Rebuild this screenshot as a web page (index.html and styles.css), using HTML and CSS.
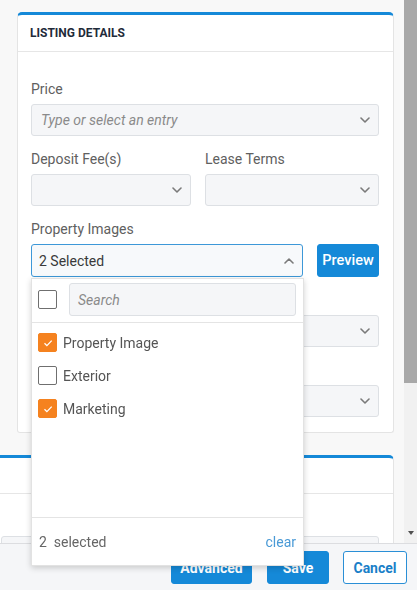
FILE: index.html
```html
<!DOCTYPE html>
<html lang="en">
<head>
<meta charset="utf-8">
<title>Listing Details</title>
<link rel="stylesheet" href="styles.css">
</head>
<body>
<div class="app">
  <main class="content">
    <section class="card">
      <header class="card-head">LISTING DETAILS</header>
      <div class="card-body">
        <div class="field">
          <label class="label">Price</label>
          <div class="select">
            <span class="placeholder">Type or select an entry</span>
            <svg class="chev" viewBox="0 0 10 6" width="10" height="6"><path d="M1 1l4 4 4-4"/></svg>
          </div>
        </div>
        <div class="row">
          <div class="field grow-sm">
            <label class="label">Deposit Fee(s)</label>
            <div class="select">
              <svg class="chev" viewBox="0 0 10 6" width="10" height="6"><path d="M1 1l4 4 4-4"/></svg>
            </div>
          </div>
          <div class="field grow-lg">
            <label class="label">Lease Terms</label>
            <div class="select">
              <svg class="chev" viewBox="0 0 10 6" width="10" height="6"><path d="M1 1l4 4 4-4"/></svg>
            </div>
          </div>
        </div>
        <div class="field">
          <label class="label">Property Images</label>
          <div class="row">
            <div class="multi">
              <div class="select select-open">
                <span class="value">2 Selected</span>
                <svg class="chev chev-up" viewBox="0 0 10 6" width="10" height="6"><path d="M1 5l4-4 4 4"/></svg>
              </div>
              <div class="dropdown">
                <div class="dd-search">
                  <span class="check"></span>
                  <div class="search-box"><span class="placeholder">Search</span></div>
                </div>
                <ul class="dd-list">
                  <li class="dd-item"><span class="check on"><svg viewBox="0 0 12 12" width="12" height="12"><path d="M2.5 6.2l2.4 2.4 4.8-5"/></svg></span>Property Image</li>
                  <li class="dd-item"><span class="check"></span>Exterior</li>
                  <li class="dd-item"><span class="check on"><svg viewBox="0 0 12 12" width="12" height="12"><path d="M2.5 6.2l2.4 2.4 4.8-5"/></svg></span>Marketing</li>
                </ul>
                <div class="dd-foot">
                  <span>2&nbsp; selected</span>
                  <a class="clear" href="#">clear</a>
                </div>
              </div>
            </div>
            <button class="btn btn-primary btn-preview" type="button">Preview</button>
          </div>
        </div>
        <div class="field">
          <span class="label"></span>
          <div class="select">
            <svg class="chev" viewBox="0 0 10 6" width="10" height="6"><path d="M1 1l4 4 4-4"/></svg>
          </div>
        </div>
        <div class="field">
          <span class="label"></span>
          <div class="select">
            <svg class="chev" viewBox="0 0 10 6" width="10" height="6"><path d="M1 1l4 4 4-4"/></svg>
          </div>
        </div>
      </div>
    </section>

    <section class="card card-wide">
      <header class="card-head"></header>
      <div class="card-body card-body-tight">
        <div class="select"></div>
      </div>
    </section>
  </main>

  <div class="scrollbar">
    <div class="thumb"></div>
    <div class="track"><span class="arrow"></span></div>
  </div>
</div>

<footer class="actions">
  <button class="btn btn-primary btn-adv" type="button">Advanced</button>
  <button class="btn btn-primary btn-save" type="button">Save</button>
  <button class="btn btn-outline btn-cancel" type="button">Cancel</button>
</footer>
</body>
</html>
```

FILE: styles.css
```css
* { box-sizing: border-box; }

html, body {
  margin: 0;
  padding: 0;
  height: 100%;
  overflow: hidden;
}

body {
  background: #f8f8f8;
  font-family: Roboto, "Liberation Sans", Arial, sans-serif;
  font-size: 14px;
  color: #555;
}

.app {
  display: flex;
  height: 543px;
}

.content {
  flex: 1;
  padding: 12px 10px 0 17px;
  min-width: 0;
}

/* cards */
.card {
  background: #fff;
  border: 1px solid #e4e4e4;
  border-top: 3px solid #1589d8;
  border-radius: 5px 5px 3px 3px;
}

.card-head {
  height: 37px;
  padding: 0 12px;
  display: flex;
  align-items: center;
  font-size: 12px;
  font-weight: 700;
  color: #1f2b3a;
  border-bottom: 1px solid #e6e6e6;
}

.card-body {
  padding: 27px 14px 15px 13px;
  display: flex;
  flex-direction: column;
  gap: 13px;
}

.card-wide {
  margin-top: 22px;
  margin-left: -30px;
}

.card-wide .card-head { height: 36px; }

.card-body-tight { padding-top: 42px; }

/* fields */
.field {
  display: flex;
  flex-direction: column;
  gap: 5px;
  position: relative;
}

.row {
  display: flex;
  gap: 14px;
}

.grow-sm { flex: 0 0 160px; }
.grow-lg { flex: 1; }

.label {
  display: block;
  height: 20px;
  line-height: 20px;
  font-size: 14px;
  color: #606060;
}

.select {
  height: 32px;
  background: #f5f6f8;
  border: 1px solid #dde0e4;
  border-radius: 3px;
  display: flex;
  align-items: center;
  padding: 0 9px;
  position: relative;
}

.placeholder {
  font-style: italic;
  color: #8a8a8a;
  font-size: 14px;
}

.chev {
  position: absolute;
  right: 8px;
  top: 50%;
  margin-top: -3px;
  fill: none;
  stroke: #7a7a7a;
  stroke-width: 1.6;
  stroke-linecap: round;
  stroke-linejoin: round;
}

.multi {
  flex: 1;
  position: relative;
}

.select-open {
  height: 33px;
  border-color: #3d98d8;
  background: #f7f9fb;
  padding-left: 7px;
}

.value {
  color: #3a3a3a;
  font-size: 14px;
}

.chev-up { right: 8px; }

/* buttons */
.btn {
  font-family: inherit;
  font-size: 14px;
  font-weight: 700;
  border-radius: 3px;
  height: 33px;
  padding: 0;
  cursor: pointer;
}

.btn-primary {
  background: #1589d8;
  border: 1px solid #1589d8;
  color: #fff;
}

.btn-outline {
  background: #fff;
  border: 1px solid #2a8fd6;
  color: #1a7fc8;
}

.btn-preview {
  width: 62px;
  flex: 0 0 62px;
  font-weight: 500;
  font-size: 14.5px;
}

/* dropdown overlay */
.dropdown {
  position: absolute;
  top: 34px;
  left: 0;
  width: 273px;
  height: 288px;
  background: #fff;
  border: 1px solid #e2e2e2;
  box-shadow: 0 2px 6px rgba(0, 0, 0, 0.18);
  z-index: 10;
  display: flex;
  flex-direction: column;
}

.dd-search {
  display: flex;
  align-items: center;
  gap: 12px;
  padding: 4px 7px 6px 6px;
  border-bottom: 1px solid #e4e4e4;
}

.search-box {
  flex: 1;
  height: 33px;
  background: #f5f6f8;
  border: 1px solid #dde0e4;
  border-radius: 3px;
  display: flex;
  align-items: center;
  padding: 0 8px;
}

.check {
  width: 19px;
  height: 19px;
  flex: 0 0 19px;
  border: 1.5px solid #6f6f6f;
  border-radius: 2px;
  display: inline-flex;
  align-items: center;
  justify-content: center;
  background: #fff;
}

.check.on {
  background: #f5821f;
  border-color: #f5821f;
}

.check svg {
  fill: none;
  stroke: #fff;
  stroke-width: 1.3;
}

.dd-list {
  list-style: none;
  margin: 0;
  padding: 3px 0 0;
  flex: 1;
}

.dd-item {
  height: 33px;
  display: flex;
  align-items: center;
  gap: 6px;
  padding-left: 6px;
  font-size: 14px;
  color: #555;
}

.dd-foot {
  height: 48px;
  border-top: 1px solid #e4e4e4;
  display: flex;
  align-items: center;
  justify-content: space-between;
  padding: 0 7px 0 7px;
  font-size: 14px;
  color: #666;
}

.clear {
  color: #4a9ad6;
  text-decoration: none;
  font-size: 14px;
}

/* scrollbar */
.scrollbar {
  width: 13px;
  display: flex;
  flex-direction: column;
}

.thumb {
  height: 383px;
  background: #a8a8a8;
}

.track {
  flex: 1;
  background: #f1f1f1;
  position: relative;
}

.arrow {
  position: absolute;
  left: 4px;
  bottom: 8px;
  width: 0;
  height: 0;
  border-left: 3px solid transparent;
  border-right: 3px solid transparent;
  border-top: 4px solid #505050;
}

/* action bar pinned to the bottom of the window */
.actions {
  position: fixed;
  left: 0;
  right: 0;
  bottom: 0;
  height: 47px;
  background: #f5f6f8;
  border-top: 1px solid #dcdde0;
  display: flex;
  justify-content: flex-end;
  align-items: flex-start;
  gap: 14px;
  padding: 7px 10px 0 0;
  z-index: 5;
}

.btn-adv { width: 81px; margin-right: 1px; }
.btn-save { width: 62px; }
.btn-cancel { width: 64px; }
```
